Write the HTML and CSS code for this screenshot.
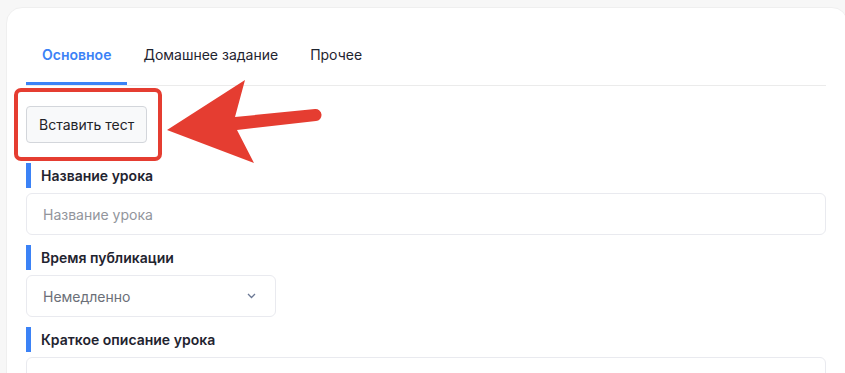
FILE: index.html
```html
<!doctype html>
<html lang="ru">

<head>
    <meta charset="utf-8">
    <title>Урок</title>
    <link rel="stylesheet" href="styles.css">
</head>

<body>
    <div class="page">
        <div class="card">
            <div class="tabs">
                <div class="tab tab_active">Основное</div>
                <div class="tab">Домашнее задание</div>
                <div class="tab">Прочее</div>
            </div>

            <button class="btn" type="button">Вставить тест</button>

            <div class="label">Название урока</div>
            <div class="field">
                <span class="placeholder">Название урока</span>
            </div>

            <div class="label">Время публикации</div>
            <div class="field field_select">
                <span class="value">Немедленно</span>
                <svg class="chevron" width="9" height="6" viewBox="0 0 9 6">
                    <polyline points="1,1 4.5,4.5 8,1" fill="none" stroke="#6b7894" stroke-width="1.3" />
                </svg>
            </div>

            <div class="label">Краткое описание урока</div>
            <div class="field field_area"></div>
        </div>
    </div>

    <!-- annotation -->
    <div class="mark"></div>
    <svg class="arrow" width="845" height="373" viewBox="0 0 845 373">
        <path d="M167,130 L245,80 L235,117 L315,109 A6,6 0 0 1 316,121 L237,130 L254,163 Z" fill="#e53d31" />
    </svg>
</body>

</html>
```

FILE: styles.css
```css
body {
    margin: 0;
    background-color: #f7f7f7;
    font-family: Inter, "Noto Sans", sans-serif;
    font-size: 14px;
    color: #1f2430;
}

.page {
    padding: 7px 0 0 6px;
    height: 100vh;
    box-sizing: border-box;
    overflow: hidden;
}

.card {
    background-color: #fff;
    border: 1px solid #efefef;
    border-radius: 16px;
    margin-right: -3px;
    padding: 20px 21px 40px 19px;
}

.tabs {
    display: flex;
    border-bottom: 1px solid #ebebeb;
}

.tab {
    padding: 17px 16px 17px;
    line-height: 20px;
    border-bottom: 3px solid transparent;
    color: #1f2430;
}

.tab_active {
    color: #3b82f6;
    font-weight: 600;
    border-bottom-color: #3b82f6;
}

.btn {
    display: block;
    margin-top: 20px;
    height: 37px;
    padding: 0 12px;
    font-family: inherit;
    font-size: 14px;
    color: #1f2328;
    background-color: #f8f9fa;
    border: 1px solid #d3d6db;
    border-radius: 4px;
}

.label {
    margin-bottom: 5px;
    height: 25px;
    line-height: 25px;
    border-left: 5px solid #3b82f6;
    padding-left: 10px;
    font-weight: 600;
}

.btn + .label {
    margin-top: 20px;
}

.field + .label {
    margin-top: 10px;
}

.field {
    display: flex;
    align-items: center;
    height: 42px;
    box-sizing: border-box;
    border: 1px solid #e9eaef;
    border-radius: 6px;
    padding: 0 16px;
}

.placeholder {
    color: #92959c;
}

.field_select {
    width: 250px;
    justify-content: space-between;
}

.value {
    color: #6b6f78;
}

.chevron {
    margin-right: 3px;
}

.field_area {
    height: 80px;
}

.mark {
    position: absolute;
    left: 14px;
    top: 88px;
    width: 148px;
    height: 73px;
    box-sizing: border-box;
    border: 4px solid #e53d31;
    border-radius: 7px;
}

.arrow {
    position: absolute;
    left: 0;
    top: 0;
    pointer-events: none;
}
```
